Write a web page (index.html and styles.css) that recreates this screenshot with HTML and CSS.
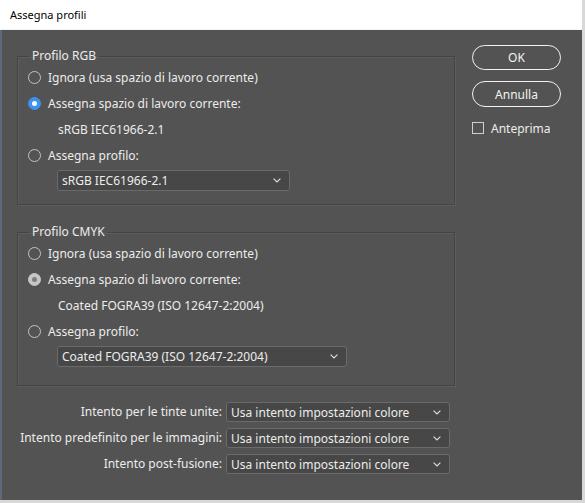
FILE: index.html
```html
<!DOCTYPE html>
<html lang="it">
<head>
<meta charset="utf-8">
<title>Assegna profili</title>
<link rel="stylesheet" href="styles.css">
</head>
<body>
<div class="window">
  <div class="titlebar">Assegna profili</div>
  <div class="dialog">
    <div class="main">
      <fieldset class="group group-rgb">
        <legend>Profilo RGB</legend>
        <div class="row"><span class="radio"></span>Ignora (usa spazio di lavoro corrente)</div>
        <div class="row"><span class="radio radio-blue"></span>Assegna spazio di lavoro corrente:</div>
        <div class="row indent">sRGB IEC61966-2.1</div>
        <div class="row"><span class="radio"></span>Assegna profilo:</div>
        <div class="select select-rgb"><span>sRGB IEC61966-2.1</span><svg class="chev" width="8" height="5" viewBox="0 0 8 5"><path d="M0.6 0.6 L4 4 L7.4 0.6" fill="none" stroke="#e0e0e0" stroke-width="1.1"/></svg></div>
      </fieldset>
      <fieldset class="group group-cmyk">
        <legend>Profilo CMYK</legend>
        <div class="row"><span class="radio"></span>Ignora (usa spazio di lavoro corrente)</div>
        <div class="row"><span class="radio radio-gray"></span>Assegna spazio di lavoro corrente:</div>
        <div class="row indent">Coated FOGRA39 (ISO 12647-2:2004)</div>
        <div class="row"><span class="radio"></span>Assegna profilo:</div>
        <div class="select select-cmyk"><span>Coated FOGRA39 (ISO 12647-2:2004)</span><svg class="chev" width="8" height="5" viewBox="0 0 8 5"><path d="M0.6 0.6 L4 4 L7.4 0.6" fill="none" stroke="#e0e0e0" stroke-width="1.1"/></svg></div>
      </fieldset>
      <div class="intents">
        <div class="intent-label">Intento per le tinte unite:</div>
        <div class="select"><span>Usa intento impostazioni colore</span><svg class="chev" width="8" height="5" viewBox="0 0 8 5"><path d="M0.6 0.6 L4 4 L7.4 0.6" fill="none" stroke="#e0e0e0" stroke-width="1.1"/></svg></div>
        <div class="intent-label">Intento predefinito per le immagini:</div>
        <div class="select"><span>Usa intento impostazioni colore</span><svg class="chev" width="8" height="5" viewBox="0 0 8 5"><path d="M0.6 0.6 L4 4 L7.4 0.6" fill="none" stroke="#e0e0e0" stroke-width="1.1"/></svg></div>
        <div class="intent-label">Intento post-fusione:</div>
        <div class="select"><span>Usa intento impostazioni colore</span><svg class="chev" width="8" height="5" viewBox="0 0 8 5"><path d="M0.6 0.6 L4 4 L7.4 0.6" fill="none" stroke="#e0e0e0" stroke-width="1.1"/></svg></div>
      </div>
    </div>
    <div class="side">
      <div class="btn">OK</div>
      <div class="btn btn-second">Annulla</div>
      <div class="check-row"><span class="checkbox"></span>Anteprima</div>
    </div>
  </div>
</div>
</body>
</html>
```

FILE: styles.css
```css
* { box-sizing: border-box; }

html, body {
  margin: 0;
  padding: 0;
}

body {
  background: #d8d8d8;
  width: 585px;
  height: 503px;
  overflow: hidden;
  font-family: "Noto Sans", "Open Sans", sans-serif;
  font-size: 12px;
  color: #ececec;
}

.window {
  width: 582px;
  height: 500px;
  display: flex;
  flex-direction: column;
}

.titlebar {
  height: 30px;
  flex: none;
  background: #ffffff;
  color: #000000;
  font-size: 11px;
  line-height: 30px;
  padding-left: 10px;
  border-bottom: 1px solid #f2f2f2;
}

.dialog {
  flex: 1;
  background: #535353;
  border-left: 2px solid #5d6a7a;
  display: flex;
  gap: 17px;
  padding: 15px 0 0 15px;
}

.main {
  width: 438px;
  display: flex;
  flex-direction: column;
  padding-top: 3px;
}

.group {
  margin: 0;
  padding: 0 0 13px 0;
  border: 1px solid #444444;
  box-shadow: inset 1px 1px 0 #5d5d5d, 1px 1px 0 #5d5d5d;
  min-width: 0;
}

.group legend {
  margin-left: 11px;
  padding: 0 3px;
  line-height: 16px;
  height: 16px;
  color: #ececec;
}

.group-cmyk {
  margin-top: 19px;
  padding-bottom: 18px;
}

.row {
  height: 26px;
  display: flex;
  align-items: center;
  padding-left: 10px;
  white-space: nowrap;
}

.row.indent {
  padding-left: 40px;
}

.radio {
  width: 13px;
  height: 13px;
  border-radius: 50%;
  border: 1px solid #c4c4c4;
  margin-right: 7px;
  flex: none;
  position: relative;
}

.radio-blue {
  background: #3c92ec;
  border-color: #3c92ec;
}

.radio-blue::after,
.radio-gray::after {
  content: "";
  position: absolute;
  left: 50%;
  top: 50%;
  width: 5px;
  height: 5px;
  margin: -2.5px 0 0 -2.5px;
  border-radius: 50%;
  background: #ffffff;
}

.radio-gray {
  background: #c6c6c6;
  border-color: #c6c6c6;
}

.radio-gray::after {
  background: #7d7d7d;
}

.select {
  height: 21px;
  border: 1px solid #6a6a6a;
  border-radius: 3px;
  background: #474747;
  display: flex;
  align-items: center;
  justify-content: space-between;
  padding: 0 8px 0 4px;
  color: #ececec;
  white-space: nowrap;
}

.select-rgb {
  margin: 2px 0 0 39px;
  width: 233px;
}

.select-cmyk {
  margin: 2px 0 0 39px;
  width: 290px;
  height: 21px;
}

.chev {
  flex: none;
}

.intents {
  margin-top: 16px;
  width: 433px;
  display: grid;
  grid-template-columns: 1fr 224px;
  column-gap: 4px;
  row-gap: 6px;
}

.intents .select {
  height: 20px;
}

.intent-label {
  text-align: right;
  line-height: 20px;
  white-space: nowrap;
}

.side {
  width: 89px;
  display: flex;
  flex-direction: column;
  padding-top: 0;
}

.btn {
  height: 25px;
  border: 1.5px solid #f2f2f2;
  border-radius: 13px;
  display: flex;
  align-items: center;
  justify-content: center;
  color: #f2f2f2;
}

.btn-second {
  margin-top: 11px;
  height: 26px;
}

.check-row {
  margin-top: 15px;
  display: flex;
  align-items: center;
  height: 12px;
  white-space: nowrap;
}

.checkbox {
  width: 12px;
  height: 12px;
  border: 1px solid #cfcfcf;
  margin-right: 7px;
  flex: none;
}
```
